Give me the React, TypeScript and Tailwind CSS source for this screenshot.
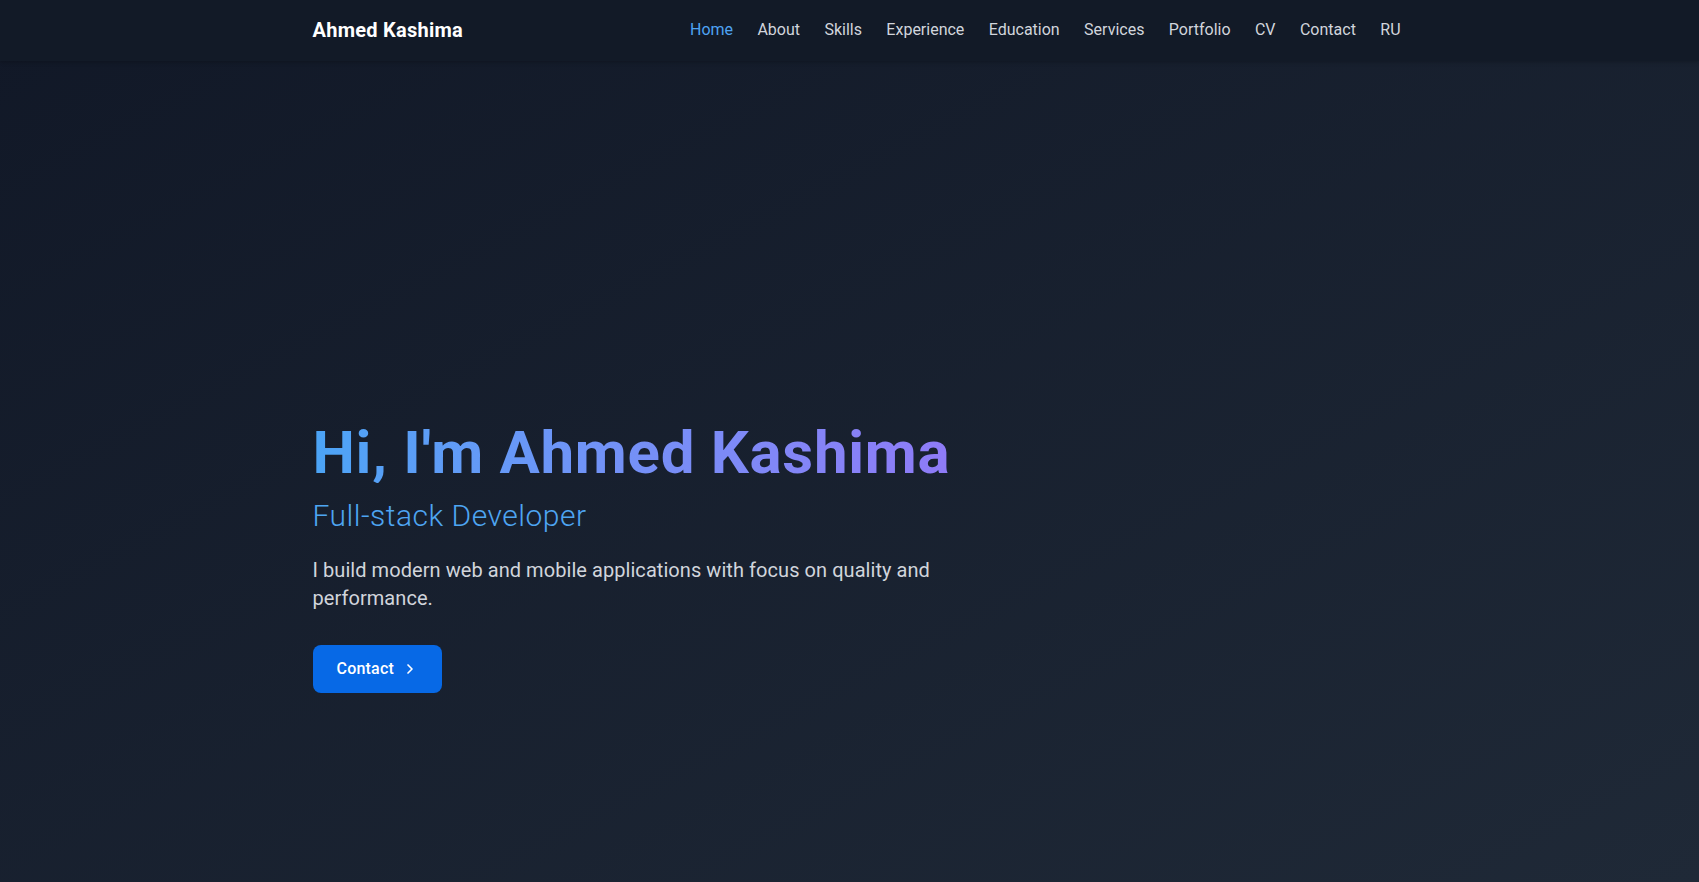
import { ChevronRight } from "lucide-react";

const links = ["Home", "About", "Skills", "Experience", "Education", "Services", "Portfolio", "CV", "Contact", "RU"];

export default function App() {
  return (
    <div className="min-h-screen w-full bg-gradient-to-br from-[#111827] to-[#1f2937] font-['Roboto',sans-serif] text-gray-300">
      <header className="w-full bg-[#121a27] shadow-[0_1px_4px_rgba(0,0,0,0.25)] pl-[14px]">
        <div className="mx-auto flex h-[61px] max-w-6xl items-center justify-between px-8 pb-[2px]">
          <a className="text-xl font-bold tracking-[0.25px] text-white">Ahmed Kashima</a>
          <nav className="flex items-center gap-[24.4px] text-base">
            {links.map((l) => (
              <a key={l} className={l === "Home" ? "text-[#4ea3f2]" : "text-gray-300"}>
                {l}
              </a>
            ))}
          </nav>
        </div>
      </header>
      <main className="pl-[14px]">
        <section className="mx-auto max-w-6xl px-8 pt-[362px] pb-[140px]">
          <h1 className="bg-gradient-to-r from-[#4ba4f6] to-[#a855f7] bg-clip-text text-6xl leading-none font-bold tracking-[0.7px] text-transparent">
            Hi, I'm Ahmed Kashima
          </h1>
          <h2 className="mt-[15px] text-3xl font-light tracking-[0.5px] text-[#4ea5f2]">Full-stack Developer</h2>
          <p className="mt-[22px] max-w-[640px] text-xl tracking-[0.06px] text-gray-300">
            I build modern web and mobile applications with focus on quality and performance.
          </p>
          <button className="mt-[33px] flex h-12 items-center gap-2 rounded-lg bg-[#0769e6] px-6 text-base font-medium tracking-[0.2px] text-white">
            Contact
            <ChevronRight className="h-4 w-4" strokeWidth={2.5} />
          </button>
        </section>
      </main>
    </div>
  );
}
